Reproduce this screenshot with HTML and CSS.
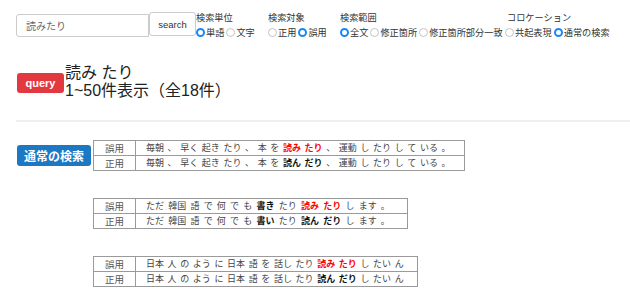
FILE: index.html
```html
<!DOCTYPE html>
<html>
<head>
    <link rel="stylesheet" href="styles.css">
</head>
<body>
    <div class="search-bar">
        <input class="search-input" type="text" value="読みたり">
        <button class="search-btn">search</button>

        <div class="opt-group g-unit">
            <div class="opt-label">検索単位</div>
            <div class="opt-row">
                <label><input type="radio" name="unit" checked>単語</label>
                <label><input type="radio" name="unit">文字</label>
            </div>
        </div>
        <div class="opt-group g-target">
            <div class="opt-label">検索対象</div>
            <div class="opt-row">
                <label><input type="radio" name="target">正用</label>
                <label><input type="radio" name="target" checked>誤用</label>
            </div>
        </div>
        <div class="opt-group g-range">
            <div class="opt-label">検索範囲</div>
            <div class="opt-row">
                <label><input type="radio" name="range" checked>全文</label>
                <label><input type="radio" name="range">修正箇所</label>
                <label><input type="radio" name="range">修正箇所部分一致</label>
            </div>
        </div>
        <div class="opt-group g-coll">
            <div class="opt-label">コロケーション</div>
            <div class="opt-row">
                <label><input type="radio" name="coll">共起表現</label>
                <label><input type="radio" name="coll" checked>通常の検索</label>
            </div>
        </div>
    </div>

    <div class="query">
        <span class="badge badge-red">query</span>
        <div class="query-text">
            <div>読み たり</div>
            <div>1~50件表示（全18件）</div>
        </div>
    </div>

    <div class="divider"></div>

    <div class="result result-first">
        <div class="result-side"><span class="badge badge-blue">通常の検索</span></div>
        <table class="pair">
            <tr><td class="kind">誤用</td><td class="sent">毎朝 、 早く 起き たり 、 本 を <b class="err">読み たり</b> 、 運動 し たり し て いる 。</td></tr>
            <tr><td class="kind">正用</td><td class="sent">毎朝 、 早く 起き たり 、 本 を <b>読ん だり</b> 、 運動 し たり し て いる 。</td></tr>
        </table>
    </div>

    <div class="result">
        <div class="result-side"></div>
        <table class="pair pair-wide">
            <tr><td class="kind">誤用</td><td class="sent">ただ 韓国 語 で 何 で も <b>書き</b> たり <b class="err">読み たり</b> し ます 。</td></tr>
            <tr><td class="kind">正用</td><td class="sent">ただ 韓国 語 で 何 で も <b>書い</b> たり <b>読ん だり</b> し ます 。</td></tr>
        </table>
    </div>

    <div class="result">
        <div class="result-side"></div>
        <table class="pair">
            <tr><td class="kind">誤用</td><td class="sent">日本 人 の よう に 日本 語 を 話し たり <b class="err">読み たり</b> し たい ん</td></tr>
            <tr><td class="kind">正用</td><td class="sent">日本 人 の よう に 日本 語 を 話し たり <b>読ん だり</b> し たい ん</td></tr>
        </table>
    </div>
</body>
</html>
```

FILE: styles.css
```css
body {
    margin: 0;
    padding: 0 0 0 16px;
    font-family: "Liberation Sans", "Noto Sans CJK JP", sans-serif;
    color: #333;
    background: #fff;
}

/* search form */
.search-bar {
    display: flex;
    align-items: flex-start;
    padding-top: 10px;
}
.search-input {
    box-sizing: border-box;
    width: 133px;
    height: 23px;
    margin-top: 4px;
    padding: 0 9px;
    border: 1px solid #ccc;
    border-radius: 3px 0 0 3px;
    font-family: "Noto Sans CJK JP", sans-serif;
    font-size: 10px;
    color: #666;
}
.search-btn {
    box-sizing: border-box;
    width: 47px;
    height: 24px;
    margin-top: 2px;
    padding: 0;
    border: 1px solid #ccc;
    border-radius: 3px;
    background: #fff;
    font-family: "Liberation Sans", sans-serif;
    font-size: 9.5px;
    color: #333;
}
.opt-group {
    font-family: "Noto Sans CJK JP", sans-serif;
    font-size: 9.2px;
    color: #333;
    white-space: nowrap;
}
.g-unit { width: 72px; }
.g-target { width: 72px; }
.g-range { width: 165px; }
.opt-label {
    line-height: 14px;
}
.g-coll .opt-label { padding-left: 2px; }
.opt-row {
    display: flex;
    line-height: 16px;
    height: 16px;
}
.opt-row label {
    display: flex;
    align-items: center;
    margin-right: 2px;
}
.opt-row input {
    appearance: none;
    box-sizing: border-box;
    width: 9px;
    height: 9px;
    margin: 0 1px 0 0;
    border: 1px solid #c4c4c4;
    border-radius: 50%;
    background: #fff;
}
.opt-row input:checked {
    border: 2.5px solid #1b87f5;
    background: #fff;
}

/* query heading */
.query {
    display: flex;
    align-items: center;
    margin-top: 24px;
}
.query-text {
    font-family: "Liberation Sans", "Noto Sans CJK JP", sans-serif;
    font-size: 16px;
    line-height: 18px;
    color: #222;
}
.badge {
    display: inline-block;
    box-sizing: border-box;
    color: #fff;
    font-weight: bold;
    border-radius: 3px;
    text-align: center;
}
.badge-red {
    width: 47px;
    height: 20px;
    line-height: 20px;
    margin: 2px 1px 0 1px;
    background: #e2383f;
    font-size: 11px;
}
.badge-blue {
    width: 74px;
    height: 21px;
    line-height: 21px;
    margin-left: 1px;
    background: #1d78c4;
    font-family: "Noto Sans CJK JP", sans-serif;
    font-size: 12px;
}

.divider {
    margin-top: 20px;
    border-top: 2px solid #f0f0f0;
}

/* results */
.result {
    display: flex;
    align-items: center;
    margin-top: 27px;
}
.result-first {
    margin-top: 18px;
}
.result-side {
    width: 77px;
    flex-shrink: 0;
}
.pair {
    border-collapse: collapse;
    border: 1px solid #9a9a9a;
    font-family: "Noto Sans CJK JP", sans-serif;
    color: #444;
}
.pair td {
    border: 1px solid #9a9a9a;
    height: 14px;
    padding: 0;
    line-height: 14px;
    white-space: nowrap;
}
.kind {
    width: 41px;
    text-align: center;
    font-size: 9.5px;
    color: #555;
}
.sent {
    padding: 0 13px 0 10px !important;
    font-size: 9px;
    word-spacing: 1.6px;
}
.pair-wide .sent {
    word-spacing: 2.2px;
    padding-right: 17px !important;
}
.sent b {
    color: #111;
}
.sent b.err {
    color: #f00;
}
```
